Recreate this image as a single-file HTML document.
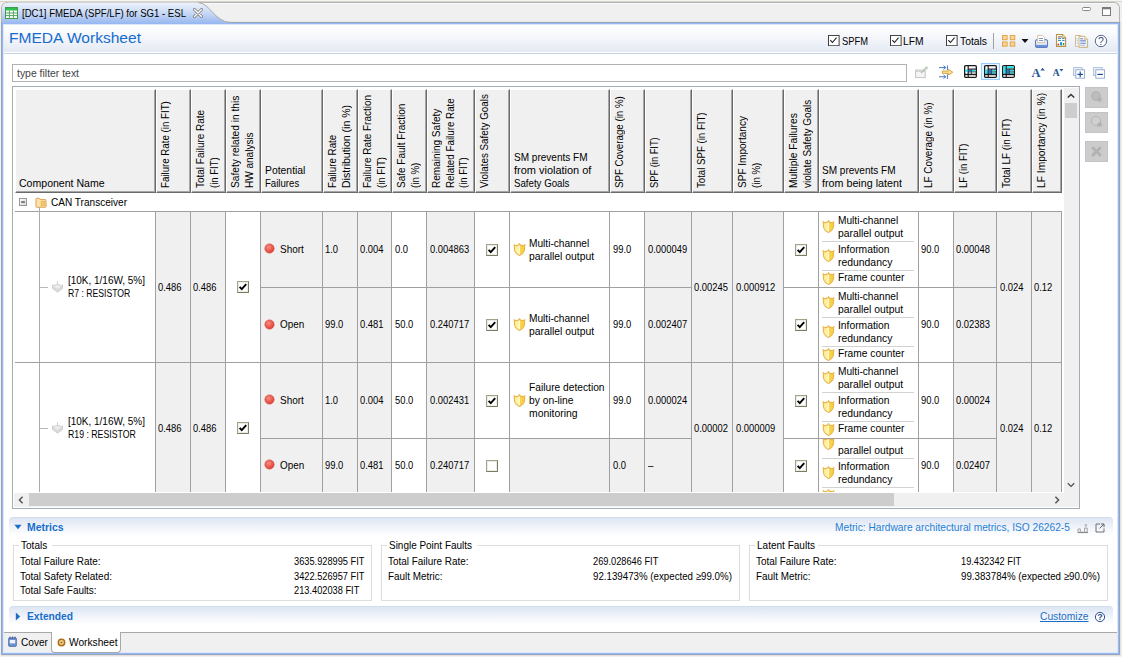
<!DOCTYPE html>
<html><head><meta charset="utf-8"><title>FMEDA Worksheet</title>
<style>
html,body{margin:0;padding:0;}
body{width:1122px;height:657px;position:relative;overflow:hidden;background:#f1f0ed;
 font-family:"Liberation Sans",sans-serif;font-size:11px;line-height:13px;color:#000;}
div,span.t,svg{position:absolute;box-sizing:border-box;}
span.t{white-space:nowrap;transform-origin:0 50%;display:block;height:13px;}
.v{transform-origin:0 0;transform:rotate(-90deg);white-space:nowrap;width:0;height:0;}
.vl{position:absolute;left:0;display:block;height:13px;line-height:13px;white-space:nowrap;transform-origin:0 50%;}
.clip{overflow:hidden;}
</style></head><body>
<svg width="0" height="0" style="left:0;top:0"><defs><linearGradient id="shg" x1="0" y1="0" x2="1" y2="0"><stop offset="0" stop-color="#fdeb8c"/><stop offset="0.45" stop-color="#fff3b4"/><stop offset="0.55" stop-color="#f9d64c"/><stop offset="1" stop-color="#f6cb3e"/></linearGradient></defs></svg>
<div style="left:0px;top:0px;width:1122px;height:1px;background:#f4f4f2;"></div>
<div style="left:0px;top:1px;width:1122px;height:1px;background:#d8d4c6;"></div>
<div style="left:1px;top:2px;width:1119px;height:21px;background:#f0f0f0;border:1px solid #b4b4b4;border-bottom:none;border-radius:6px 6px 0 0;box-shadow:inset 0 1px 0 #f8f8f8;"></div>
<div style="left:2px;top:21px;width:1117px;height:1px;background:#ece9e0;"></div>
<div style="left:1120px;top:22px;width:1px;height:634px;background:#e4e2dd;"></div>
<div style="left:1px;top:655px;width:1120px;height:1px;background:#e2e1dd;"></div>
<div style="left:1px;top:22px;width:1119px;height:633px;background:#97a3bc;"></div>
<div style="left:2px;top:23px;width:1117px;height:631px;background:#96b9f6;"></div>
<div style="left:3px;top:24px;width:1115px;height:629px;background:#dbe7fb;"></div>
<div style="left:4px;top:25px;width:1113px;height:627px;background:#ffffff;"></div>
<svg style="left:2px;top:2px" width="232" height="21" viewBox="0 0 232 21">
<defs><linearGradient id="tg" x1="0" y1="0" x2="0" y2="1"><stop offset="0" stop-color="#eef3fc"/><stop offset="0.45" stop-color="#cddcf6"/><stop offset="1" stop-color="#9bbaf0"/></linearGradient></defs>
<path d="M0 21 L0 7 Q0 0.5 7 0.5 L196 0.5 C208 1 213 20.5 229 20.5 L229 21 Z" fill="url(#tg)"/>
<path d="M196 0.5 C208 1 213 20.5 229 20.5" fill="none" stroke="#a8a8a8" stroke-width="1"/>
</svg>
<svg style="left:5px;top:7px" width="13" height="12" viewBox="0 0 13 12">
<rect x="0.5" y="0.5" width="12" height="11" fill="#fff" stroke="#3f9a4c"/>
<rect x="1" y="1" width="11" height="2.5" fill="#2fc04a"/>
<path d="M1 6h11M1 8.6h11M4.4 3.5v8M8.4 3.5v8" stroke="#56a564" stroke-width="1"/>
</svg>
<span class="t" style="left:22px;top:7px;transform:scaleX(0.871);">[DC1] FMEDA (SPF/LF) for SG1 - ESL</span>
<svg style="left:193px;top:8px" width="10" height="10" viewBox="0 0 10 10">
<path d="M1.5 1.5L8.5 8.5M8.5 1.5L1.5 8.5" stroke="#7d7d7d" stroke-width="3" stroke-linecap="round"/>
<path d="M1.5 1.5L8.5 8.5M8.5 1.5L1.5 8.5" stroke="#fff" stroke-width="1.4" stroke-linecap="round"/>
</svg>
<svg style="left:1081px;top:6px" width="32" height="11" viewBox="0 0 32 11">
<rect x="1.5" y="1.5" width="8" height="3" rx="1" fill="#fff" stroke="#858585"/>
<rect x="21.5" y="1.5" width="8" height="8" fill="#fcfcfc" stroke="#7a7a7a"/>
<path d="M21 2.6h9" stroke="#7a7a7a" stroke-width="1.3"/>
</svg>
<div style="left:4px;top:25px;width:1113px;height:27px;background:linear-gradient(180deg,#ffffff 0%,#f6f8fc 40%,#e4e9f3 100%);"></div>
<div style="left:4px;top:53px;width:1113px;height:1px;background:#c2d2e5;"></div>
<span class="t" style="left:8.6px;top:31px;transform:scaleX(1.037);font-size:15px;color:#166dcc;font-family:'Liberation Sans',sans-serif;">FMEDA Worksheet</span>
<svg style="left:828px;top:35px" width="11.6" height="11.2" viewBox="0 0 12 12" preserveAspectRatio="none"><rect x="0.5" y="0.5" width="11" height="11" fill="#fff" stroke="#3a3a3a"/><path d="M2.4 5.6L4.6 8L8.8 2.8" fill="none" stroke="#222" stroke-width="1.1"/></svg>
<span class="t" style="left:841.8px;top:34px;transform:scaleX(0.807);font-size:11.6px;">SPFM</span>
<svg style="left:890px;top:35px" width="11.6" height="11.2" viewBox="0 0 12 12" preserveAspectRatio="none"><rect x="0.5" y="0.5" width="11" height="11" fill="#fff" stroke="#3a3a3a"/><path d="M2.4 5.6L4.6 8L8.8 2.8" fill="none" stroke="#222" stroke-width="1.1"/></svg>
<span class="t" style="left:903.4px;top:34px;transform:scaleX(0.884);font-size:11.6px;">LFM</span>
<svg style="left:946px;top:35px" width="11.6" height="11.2" viewBox="0 0 12 12" preserveAspectRatio="none"><rect x="0.5" y="0.5" width="11" height="11" fill="#fff" stroke="#3a3a3a"/><path d="M2.4 5.6L4.6 8L8.8 2.8" fill="none" stroke="#222" stroke-width="1.1"/></svg>
<span class="t" style="left:959.8px;top:34px;transform:scaleX(0.891);font-size:11.6px;">Totals</span>
<div style="left:993px;top:33px;width:1px;height:16px;background:#a0a0a0;"></div>
<svg style="left:1002px;top:35px" width="14" height="12" viewBox="0 0 14 12">
<g fill="#fbd595" stroke="#e2a64a"><rect x="0.5" y="0.5" width="4.6" height="4.2"/><rect x="8.2" y="0.5" width="4.6" height="4.2"/><rect x="0.5" y="7" width="4.6" height="4.2"/><rect x="8.2" y="7" width="4.6" height="4.2"/></g></svg>
<svg style="left:1021px;top:39px" width="8" height="4" viewBox="0 0 8 4"><path d="M0.5 0h7L4 4z" fill="#111"/></svg>
<svg style="left:1034px;top:34px" width="15" height="15" viewBox="0 0 15 15">
<defs><linearGradient id="pg" x1="0" y1="0" x2="0" y2="1"><stop offset="0" stop-color="#ffffff"/><stop offset="1" stop-color="#c3d3ef"/></linearGradient></defs>
<rect x="1.5" y="5.6" width="12" height="7.8" rx="2" fill="url(#pg)" stroke="#5d7fc2" stroke-width="1.1"/>
<path d="M2 11h11v0.9q0 1.1-1.4 1.1H3.4q-1.4 0-1.4-1.1z" fill="#6d8fd3"/>
<path d="M3.6 8.6V1.4h4.8l2.2 2.2v5z" fill="#fff" stroke="#d6c08e" stroke-width="0.9"/>
<path d="M5 4.5h4M5 6.5h4.2" stroke="#7a98d0" stroke-width="1"/>
</svg>
<svg style="left:1055px;top:33px" width="12" height="15" viewBox="0 0 12 15">
<defs><linearGradient id="rpg" x1="0" y1="0" x2="0" y2="1"><stop offset="0.5" stop-color="#ffffff"/><stop offset="1" stop-color="#dffaf2"/></linearGradient></defs>
<path d="M1.5 1.5H7.5L10.6 4.6V13.4H1.5z" fill="url(#rpg)" stroke="#b8923c" stroke-width="1.1" stroke-linejoin="round"/>
<path d="M7.5 1.5V4.6H10.6" fill="#f3e6c4" stroke="#b8923c" stroke-width="0.7"/>
<rect x="3" y="3.1" width="3.8" height="1.5" fill="#a89088"/>
<rect x="3" y="5.2" width="3" height="0.9" fill="#2f7fc8"/><rect x="7" y="5.2" width="2.6" height="0.9" fill="#2f7fc8"/>
<rect x="3" y="7.1" width="3" height="0.9" fill="#2f7fc8"/><rect x="7" y="7.1" width="2.6" height="0.9" fill="#2f7fc8"/>
<path d="M3.3 10.4l1.1 1.1l-1.1 1.1l-1.1-1.1z" fill="#ee2222"/>
<rect x="5.1" y="9.2" width="1.9" height="3.1" fill="#1e88e0"/>
<ellipse cx="8.6" cy="11.1" rx="0.8" ry="1.2" fill="#1f9a4a"/>
</svg>
<svg style="left:1074px;top:34px" width="15" height="15" viewBox="0 0 15 15">
<defs><linearGradient id="cpg" x1="0" y1="0" x2="1" y2="1"><stop offset="0.4" stop-color="#ffffff"/><stop offset="1" stop-color="#dfe7f6"/></linearGradient></defs>
<path d="M1.5 1.5H6.6L8.6 3.5V12.3H1.5z" fill="#fff" stroke="#cdb47e" stroke-width="0.9"/>
<path d="M2.4 4.6h1.8M2.4 6.3h1.8M2.4 8h1.8M2.4 9.7h1.8" stroke="#a9bbe0" stroke-width="0.8"/>
<path d="M5 2.3H10.6L13.6 5.3V13.3H5z" fill="url(#cpg)" stroke="#c4a86c" stroke-width="0.9" stroke-linejoin="round"/>
<path d="M10.6 2.3V5.3H13.6" fill="#f1e4c0" stroke="#c4a86c" stroke-width="0.6"/>
<path d="M6.2 4.7h2.8M6.2 6.3h5.6" stroke="#5f7fc0" stroke-width="0.9"/><path d="M6.2 7.9h5.6M6.2 9.5h5.6" stroke="#7f99cf" stroke-width="0.9"/><path d="M6.2 11.2h4.6" stroke="#a3b6dd" stroke-width="0.9"/>
</svg>
<svg style="left:1094px;top:34px" width="14" height="14" viewBox="0 0 14 14">
<circle cx="7" cy="7" r="5.7" fill="#fff" stroke="#5a6a8c" stroke-width="1"/>
<text x="7" y="10.8" font-family="Liberation Sans, sans-serif" font-size="10.5" fill="#3d4f78" text-anchor="middle">?</text>
</svg>
<div style="left:12px;top:64px;width:895px;height:18px;background:#ffffff;border:1px solid #b2b2b2;"></div>
<span class="t" style="left:17px;top:67px;transform:scaleX(0.948);color:#444;">type filter text</span>
<svg style="left:915px;top:66px" width="14" height="13" viewBox="0 0 14 13">
<rect x="0.6" y="4" width="9.6" height="7.6" fill="#f4f4f4" stroke="#c4c4c4"/><path d="M1 5.4h9" stroke="#d0d0d0" stroke-width="1.2"/>
<path d="M6 7L11.5 1.5" stroke="#b4c4b4" stroke-width="1.4"/><circle cx="11.5" cy="2" r="1.4" fill="#bcd0bc"/>
</svg>
<svg style="left:939px;top:65px" width="15" height="14" viewBox="0 0 15 14">
<path d="M0 2.6h6.5M4.5 0.8L6.8 2.6L4.5 4.4M8.4 0.4v4.6" stroke="#4a74b8" fill="none" stroke-width="1"/>
<path d="M0 11.8h6.5M4.5 10L6.8 11.8L4.5 13.6M8.4 9.4v4.6" stroke="#4a74b8" fill="none" stroke-width="1"/>
<path d="M3.4 6h6.2V4.4l4.2 2.8L9.6 10V8.4H3.4z" fill="#fbe3a0" stroke="#d29a2c" stroke-width="0.9"/>
</svg>
<svg style="left:964px;top:65px" width="13" height="13" viewBox="0 0 13 13">
<rect x="0.65" y="0.65" width="11.7" height="11.7" rx="1.1" fill="#fff" stroke="#1a1a1a" stroke-width="1.3"/>
<rect x="1.3" y="4.6" width="2.4" height="2.1" fill="#19e6ee"/><rect x="4.8" y="4.8" width="2.2" height="2.8" fill="#0a84f0"/><rect x="7.8" y="4.8" width="3.9" height="1.6" fill="#19e6ee"/>
<path d="M4.2 0.8v11.4" stroke="#1a1a1a" stroke-width="1.2"/><path d="M4.2 4.1h8.1" stroke="#1a1a1a" stroke-width="1.1"/><path d="M0.7 9.5h11.6" stroke="#1a1a1a" stroke-width="1.5"/>
<path d="M7.4 4.1v5.4" stroke="#1a1a1a" stroke-width="0.8"/><path d="M7.4 6.9h4.9" stroke="#1a1a1a" stroke-width="0.8"/>
<rect x="1.4" y="10.5" width="2" height="0.9" fill="#d8d8d8"/><rect x="5" y="10.5" width="6.6" height="0.9" fill="#d8d8d8"/>
</svg>
<div style="left:981px;top:63px;width:19px;height:17px;background:#e5f3ff;border:1px solid #99ccff;"></div>
<svg style="left:984px;top:65px" width="13" height="13" viewBox="0 0 13 13">
<rect x="0.65" y="0.65" width="11.7" height="11.7" rx="1.1" fill="#fff" stroke="#1a1a1a" stroke-width="1.3"/>
<rect x="1.3" y="4.4" width="2.4" height="4.5" fill="#19e6ee"/><rect x="4.8" y="4.8" width="2.2" height="4" fill="#0a84f0"/><rect x="7.8" y="4.8" width="3.9" height="1.6" fill="#19e6ee"/><rect x="7.8" y="7.4" width="3.9" height="1.5" fill="#19e6ee"/>
<path d="M4.2 0.8v11.4" stroke="#1a1a1a" stroke-width="1.2"/><path d="M4.2 4.1h8.1" stroke="#1a1a1a" stroke-width="1.1"/><path d="M0.7 9.5h11.6" stroke="#1a1a1a" stroke-width="1.5"/>
<path d="M7.4 4.1v5.4" stroke="#1a1a1a" stroke-width="0.8"/><path d="M7.4 6.9h4.9" stroke="#1a1a1a" stroke-width="0.8"/>
<rect x="1.4" y="10.5" width="2" height="0.9" fill="#d8d8d8"/><rect x="5" y="10.5" width="6.6" height="0.9" fill="#d8d8d8"/>
</svg>
<svg style="left:1002px;top:65px" width="13" height="13" viewBox="0 0 13 13">
<rect x="0.65" y="0.65" width="11.7" height="11.7" rx="1.1" fill="#fff" stroke="#1a1a1a" stroke-width="1.3"/>
<rect x="1.3" y="1.3" width="2.4" height="7.6" fill="#19e6ee"/><rect x="4.8" y="1.3" width="6.9" height="2.3" fill="#19e6ee"/><rect x="4.8" y="4.8" width="2.2" height="4" fill="#0a84f0"/><rect x="7.8" y="4.8" width="3.9" height="1.6" fill="#19e6ee"/><rect x="7.8" y="7.4" width="3.9" height="1.5" fill="#19e6ee"/>
<path d="M4.2 0.8v11.4" stroke="#1a1a1a" stroke-width="1.2"/><path d="M4.2 4.1h8.1" stroke="#1a1a1a" stroke-width="1.1"/><path d="M0.7 9.5h11.6" stroke="#1a1a1a" stroke-width="1.5"/>
<path d="M7.4 4.1v5.4" stroke="#1a1a1a" stroke-width="0.8"/><path d="M7.4 6.9h4.9" stroke="#1a1a1a" stroke-width="0.8"/>
<rect x="1.4" y="10.5" width="2" height="0.9" fill="#d8d8d8"/><rect x="5" y="10.5" width="6.6" height="0.9" fill="#d8d8d8"/>
</svg>
<svg style="left:1031px;top:66px" width="15" height="12" viewBox="0 0 15 12">
<text x="0.5" y="11" font-family="Liberation Serif, serif" font-size="12.5" font-weight="bold" fill="#2b5797">A</text>
<path d="M9.4 4.4L11.6 1.8L13.8 4.4z" fill="#2b5797"/></svg>
<svg style="left:1052px;top:66px" width="13" height="12" viewBox="0 0 13 12">
<text x="0.5" y="10.2" font-family="Liberation Serif, serif" font-size="10" font-weight="bold" fill="#2b5797">A</text>
<path d="M7.4 3L9.4 5.4L11.4 3z" fill="#2b5797"/></svg>
<svg style="left:1073px;top:67px" width="13" height="12" viewBox="0 0 13 12">
<rect x="0.6" y="0.6" width="8.6" height="8" fill="#eef3fb" stroke="#a9bbd8" stroke-width="0.9"/>
<rect x="2.8" y="2.8" width="8.8" height="8.4" fill="#fff" stroke="#8ea6cc" stroke-width="0.9"/>
<path d="M4.4 7.4h5.6" stroke="#1c4f96" stroke-width="1.2"/><path d="M7.2 4.6v5.6" stroke="#1c4f96" stroke-width="1.2"/></svg>
<svg style="left:1093px;top:67px" width="13" height="12" viewBox="0 0 13 12">
<rect x="0.6" y="0.6" width="8.6" height="8" fill="#eef3fb" stroke="#a9bbd8" stroke-width="0.9"/>
<rect x="2.8" y="2.8" width="8.8" height="8.4" fill="#fff" stroke="#8ea6cc" stroke-width="0.9"/>
<path d="M4.4 7.4h5.6" stroke="#1c4f96" stroke-width="1.2"/></svg>
<div style="left:12px;top:86px;width:1068px;height:423px;background:#ffffff;border:1px solid #a4acb8;"></div>
<div style="left:15px;top:89px;width:141px;height:104px;background:#f0f0f0;border:1px solid #6a6a6a;border-left-color:#fff;border-top-color:#fff;box-shadow:inset -1px -1px 0 #a6a6a6;"></div>
<div style="left:156px;top:89px;width:35px;height:104px;background:#f0f0f0;border:1px solid #6a6a6a;border-left-color:#fff;border-top-color:#fff;box-shadow:inset -1px -1px 0 #a6a6a6;"></div>
<div style="left:191px;top:89px;width:35px;height:104px;background:#f0f0f0;border:1px solid #6a6a6a;border-left-color:#fff;border-top-color:#fff;box-shadow:inset -1px -1px 0 #a6a6a6;"></div>
<div style="left:226px;top:89px;width:35px;height:104px;background:#f0f0f0;border:1px solid #6a6a6a;border-left-color:#fff;border-top-color:#fff;box-shadow:inset -1px -1px 0 #a6a6a6;"></div>
<div style="left:261px;top:89px;width:62px;height:104px;background:#f0f0f0;border:1px solid #6a6a6a;border-left-color:#fff;border-top-color:#fff;box-shadow:inset -1px -1px 0 #a6a6a6;"></div>
<div style="left:323px;top:89px;width:35px;height:104px;background:#f0f0f0;border:1px solid #6a6a6a;border-left-color:#fff;border-top-color:#fff;box-shadow:inset -1px -1px 0 #a6a6a6;"></div>
<div style="left:358px;top:89px;width:34px;height:104px;background:#f0f0f0;border:1px solid #6a6a6a;border-left-color:#fff;border-top-color:#fff;box-shadow:inset -1px -1px 0 #a6a6a6;"></div>
<div style="left:392px;top:89px;width:35px;height:104px;background:#f0f0f0;border:1px solid #6a6a6a;border-left-color:#fff;border-top-color:#fff;box-shadow:inset -1px -1px 0 #a6a6a6;"></div>
<div style="left:427px;top:89px;width:48px;height:104px;background:#f0f0f0;border:1px solid #6a6a6a;border-left-color:#fff;border-top-color:#fff;box-shadow:inset -1px -1px 0 #a6a6a6;"></div>
<div style="left:475px;top:89px;width:35px;height:104px;background:#f0f0f0;border:1px solid #6a6a6a;border-left-color:#fff;border-top-color:#fff;box-shadow:inset -1px -1px 0 #a6a6a6;"></div>
<div style="left:510px;top:89px;width:100px;height:104px;background:#f0f0f0;border:1px solid #6a6a6a;border-left-color:#fff;border-top-color:#fff;box-shadow:inset -1px -1px 0 #a6a6a6;"></div>
<div style="left:610px;top:89px;width:35px;height:104px;background:#f0f0f0;border:1px solid #6a6a6a;border-left-color:#fff;border-top-color:#fff;box-shadow:inset -1px -1px 0 #a6a6a6;"></div>
<div style="left:645px;top:89px;width:47px;height:104px;background:#f0f0f0;border:1px solid #6a6a6a;border-left-color:#fff;border-top-color:#fff;box-shadow:inset -1px -1px 0 #a6a6a6;"></div>
<div style="left:692px;top:89px;width:41px;height:104px;background:#f0f0f0;border:1px solid #6a6a6a;border-left-color:#fff;border-top-color:#fff;box-shadow:inset -1px -1px 0 #a6a6a6;"></div>
<div style="left:733px;top:89px;width:51px;height:104px;background:#f0f0f0;border:1px solid #6a6a6a;border-left-color:#fff;border-top-color:#fff;box-shadow:inset -1px -1px 0 #a6a6a6;"></div>
<div style="left:784px;top:89px;width:35px;height:104px;background:#f0f0f0;border:1px solid #6a6a6a;border-left-color:#fff;border-top-color:#fff;box-shadow:inset -1px -1px 0 #a6a6a6;"></div>
<div style="left:819px;top:89px;width:100px;height:104px;background:#f0f0f0;border:1px solid #6a6a6a;border-left-color:#fff;border-top-color:#fff;box-shadow:inset -1px -1px 0 #a6a6a6;"></div>
<div style="left:919px;top:89px;width:35px;height:104px;background:#f0f0f0;border:1px solid #6a6a6a;border-left-color:#fff;border-top-color:#fff;box-shadow:inset -1px -1px 0 #a6a6a6;"></div>
<div style="left:954px;top:89px;width:43px;height:104px;background:#f0f0f0;border:1px solid #6a6a6a;border-left-color:#fff;border-top-color:#fff;box-shadow:inset -1px -1px 0 #a6a6a6;"></div>
<div style="left:997px;top:89px;width:35px;height:104px;background:#f0f0f0;border:1px solid #6a6a6a;border-left-color:#fff;border-top-color:#fff;box-shadow:inset -1px -1px 0 #a6a6a6;"></div>
<div style="left:1032px;top:89px;width:30px;height:104px;background:#f0f0f0;border:1px solid #6a6a6a;border-left-color:#fff;border-top-color:#fff;box-shadow:inset -1px -1px 0 #a6a6a6;"></div>
<span class="t" style="left:18.7px;top:177px;transform:scaleX(0.959);">Component Name</span>
<div class="v" style="left:158.90px;top:188.3px;"><span class="vl" style="top:0.00px;transform:scaleX(0.882)">Failure Rate (in FIT)</span></div>
<div class="v" style="left:193.90px;top:188.3px;"><span class="vl" style="top:0.00px;transform:scaleX(0.906)">Total Failure Rate</span><span class="vl" style="top:13.70px;transform:scaleX(0.866)">(in FIT)</span></div>
<div class="v" style="left:228.90px;top:188.3px;"><span class="vl" style="top:0.00px;transform:scaleX(0.926)">Safety related in this</span><span class="vl" style="top:13.70px;transform:scaleX(0.910)">HW analysis</span></div>
<span class="t" style="left:264.5px;top:164px;transform:scaleX(0.944);">Potential</span>
<span class="t" style="left:264.5px;top:177px;transform:scaleX(0.874);">Failures</span>
<div class="v" style="left:325.90px;top:188.3px;"><span class="vl" style="top:0.00px;transform:scaleX(0.888)">Failure Rate</span><span class="vl" style="top:13.70px;transform:scaleX(0.957)">Distribution (in %)</span></div>
<div class="v" style="left:360.90px;top:188.3px;"><span class="vl" style="top:0.00px;transform:scaleX(0.905)">Failure Rate Fraction</span><span class="vl" style="top:13.70px;transform:scaleX(0.875)">(in FIT)</span></div>
<div class="v" style="left:394.90px;top:188.3px;"><span class="vl" style="top:0.00px;transform:scaleX(0.907)">Safe Fault Fraction</span><span class="vl" style="top:13.70px;transform:scaleX(0.881)">(in %)</span></div>
<div class="v" style="left:429.90px;top:188.3px;"><span class="vl" style="top:0.00px;transform:scaleX(0.914)">Remaining Safety</span><span class="vl" style="top:13.70px;transform:scaleX(0.890)">Related Failure Rate</span><span class="vl" style="top:27.40px;transform:scaleX(0.866)">(in FIT)</span></div>
<div class="v" style="left:477.90px;top:188.3px;"><span class="vl" style="top:0.00px;transform:scaleX(0.894)">Violates Safety Goals</span></div>
<span class="t" style="left:513.7px;top:151px;transform:scaleX(0.912);">SM prevents FM</span>
<span class="t" style="left:513.7px;top:164px;transform:scaleX(0.997);">from violation of</span>
<span class="t" style="left:513.7px;top:177px;transform:scaleX(0.880);">Safety Goals</span>
<div class="v" style="left:612.90px;top:188.3px;"><span class="vl" style="top:0.00px;transform:scaleX(0.883)">SPF Coverage (in %)</span></div>
<div class="v" style="left:647.90px;top:188.3px;"><span class="vl" style="top:0.00px;transform:scaleX(0.847)">SPF (in FIT)</span></div>
<div class="v" style="left:694.90px;top:188.3px;"><span class="vl" style="top:0.00px;transform:scaleX(0.877)">Total SPF (in FIT)</span></div>
<div class="v" style="left:735.90px;top:188.3px;"><span class="vl" style="top:0.00px;transform:scaleX(0.912)">SPF Importancy</span><span class="vl" style="top:13.70px;transform:scaleX(0.881)">(in %)</span></div>
<div class="v" style="left:786.90px;top:188.3px;"><span class="vl" style="top:0.00px;transform:scaleX(0.935)">Multiple Failures</span><span class="vl" style="top:13.70px;transform:scaleX(0.901)">violate Safety Goals</span></div>
<span class="t" style="left:822.4px;top:164px;transform:scaleX(0.912);">SM prevents FM</span>
<span class="t" style="left:822.4px;top:177px;transform:scaleX(0.975);">from being latent</span>
<div class="v" style="left:921.90px;top:188.3px;"><span class="vl" style="top:0.00px;transform:scaleX(0.898)">LF Coverage (in %)</span></div>
<div class="v" style="left:956.90px;top:188.3px;"><span class="vl" style="top:0.00px;transform:scaleX(0.865)">LF (in FIT)</span></div>
<div class="v" style="left:999.90px;top:188.3px;"><span class="vl" style="top:0.00px;transform:scaleX(0.894)">Total LF (in FIT)</span></div>
<div class="v" style="left:1034.90px;top:188.3px;"><span class="vl" style="top:0.00px;transform:scaleX(0.931)">LF Importancy (in %)</span></div>
<div style="left:15px;top:211px;width:1047px;height:1px;background:#a0a0a0;"></div>
<svg style="left:19px;top:198px" width="8" height="8" viewBox="0 0 9 9">
<defs><linearGradient id="eg" x1="0" y1="0" x2="1" y2="1"><stop offset="0" stop-color="#fff"/><stop offset="1" stop-color="#d4d4d4"/></linearGradient></defs>
<rect x="0.5" y="0.5" width="8" height="8" fill="url(#eg)" stroke="#8f8f8f"/><path d="M2.4 4.5h4.2" stroke="#111" stroke-width="1.1"/></svg>
<svg style="left:34.5px;top:196.5px" width="12" height="11" viewBox="0 0 13 12">
<path d="M1 10.4V2.4q0-1 1-1h2.6l1 1.4H11q1 0 1 1v6.6q0 0.8-1 0.8H2q-1 0-1-0.8z" fill="#fbe3ab" stroke="#dc9a45" stroke-width="1"/>
<rect x="6.6" y="4.6" width="4" height="5" fill="#f6c86e" stroke="#e0a95a" stroke-width="0.6"/>
</svg>
<span class="t" style="left:50.7px;top:196px;transform:scaleX(0.914);">CAN Transceiver</span>
<div style="left:39px;top:207px;width:1px;height:285px;background:#acacac;"></div>
<div style="left:156px;top:212px;width:34px;height:150px;background:#f0f0f0;"></div>
<div style="left:191px;top:212px;width:34px;height:150px;background:#f0f0f0;"></div>
<div style="left:692px;top:212px;width:40px;height:150px;background:#f0f0f0;"></div>
<div style="left:733px;top:212px;width:50px;height:150px;background:#f0f0f0;"></div>
<div style="left:997px;top:212px;width:34px;height:150px;background:#f0f0f0;"></div>
<div style="left:1032px;top:212px;width:29px;height:150px;background:#f0f0f0;"></div>
<div style="left:155px;top:212px;width:1px;height:150px;background:#a0a0a0;"></div>
<div style="left:190px;top:212px;width:1px;height:150px;background:#a0a0a0;"></div>
<div style="left:225px;top:212px;width:1px;height:150px;background:#a0a0a0;"></div>
<div style="left:260px;top:212px;width:1px;height:150px;background:#a0a0a0;"></div>
<div style="left:322px;top:212px;width:1px;height:150px;background:#a0a0a0;"></div>
<div style="left:357px;top:212px;width:1px;height:150px;background:#a0a0a0;"></div>
<div style="left:391px;top:212px;width:1px;height:150px;background:#a0a0a0;"></div>
<div style="left:426px;top:212px;width:1px;height:150px;background:#a0a0a0;"></div>
<div style="left:474px;top:212px;width:1px;height:150px;background:#a0a0a0;"></div>
<div style="left:509px;top:212px;width:1px;height:150px;background:#a0a0a0;"></div>
<div style="left:609px;top:212px;width:1px;height:150px;background:#a0a0a0;"></div>
<div style="left:644px;top:212px;width:1px;height:150px;background:#a0a0a0;"></div>
<div style="left:691px;top:212px;width:1px;height:150px;background:#a0a0a0;"></div>
<div style="left:732px;top:212px;width:1px;height:150px;background:#a0a0a0;"></div>
<div style="left:783px;top:212px;width:1px;height:150px;background:#a0a0a0;"></div>
<div style="left:818px;top:212px;width:1px;height:150px;background:#a0a0a0;"></div>
<div style="left:918px;top:212px;width:1px;height:150px;background:#a0a0a0;"></div>
<div style="left:953px;top:212px;width:1px;height:150px;background:#a0a0a0;"></div>
<div style="left:996px;top:212px;width:1px;height:150px;background:#a0a0a0;"></div>
<div style="left:1031px;top:212px;width:1px;height:150px;background:#a0a0a0;"></div>
<div style="left:1061px;top:212px;width:1px;height:150px;background:#a0a0a0;"></div>
<div style="left:40px;top:287px;width:8px;height:1px;background:#b8b8b8;"></div>
<svg style="left:52px;top:281px" width="12" height="12" viewBox="0 0 12 12">
<path d="M0.5 5.2L5.5 3.2L10.6 5.2V7.4L5.5 11.2L0.5 7.4z" fill="#dcdcdc" stroke="#c9c9c9" stroke-width="0.8"/>
<path d="M0.5 5.2L5.5 3.2L10.6 5.2L5.5 8.6z" fill="#ececec" stroke="#cdcdcd" stroke-width="0.7"/>
<path d="M5.5 0.2v3.2M0.6 3.6v1.8M10.5 3.6v1.8" stroke="#cfcfcf" stroke-width="1"/></svg>
<span class="t" style="left:67.6px;top:274px;transform:scaleX(0.906);">[10K, 1/16W, 5%]</span>
<span class="t" style="left:67.6px;top:287px;transform:scaleX(0.786);">R7 : RESISTOR</span>
<span class="t" style="left:158.2px;top:281px;transform:scaleX(0.853);">0.486</span>
<span class="t" style="left:193.2px;top:281px;transform:scaleX(0.853);">0.486</span>
<svg style="left:237px;top:281px" width="12" height="12" viewBox="0 0 12 12"><rect x="0.5" y="0.5" width="11" height="11" fill="#fff" stroke="#a2a38c"/><path d="M11.5 0.5v11h-11" fill="none" stroke="#7a7b62"/><rect x="1.5" y="1.5" width="9" height="9" fill="none" stroke="#ecece4"/><path d="M2.6 5.8L4.8 8.2L9.2 3.2" fill="none" stroke="#000" stroke-width="1.9"/></svg>
<span class="t" style="left:694.4px;top:281px;transform:scaleX(0.852);">0.00245</span>
<span class="t" style="left:735.7px;top:281px;transform:scaleX(0.852);">0.000912</span>
<span class="t" style="left:999.8px;top:281px;transform:scaleX(0.853);">0.024</span>
<span class="t" style="left:1034.0px;top:281px;transform:scaleX(0.854);">0.12</span>
<div style="left:261px;top:287px;width:431px;height:1px;background:#a0a0a0;"></div>
<div style="left:784px;top:287px;width:213px;height:1px;background:#a0a0a0;"></div>
<div style="left:261px;top:212px;width:61px;height:75px;background:#f0f0f0;"></div>
<div style="left:323px;top:212px;width:34px;height:75px;background:#f0f0f0;"></div>
<div style="left:358px;top:212px;width:33px;height:75px;background:#f0f0f0;"></div>
<div style="left:427px;top:212px;width:47px;height:75px;background:#f0f0f0;"></div>
<div style="left:645px;top:212px;width:46px;height:75px;background:#f0f0f0;"></div>
<div style="left:954px;top:212px;width:42px;height:75px;background:#f0f0f0;"></div>
<svg style="left:264.2px;top:243.2px" width="11" height="11" viewBox="0 0 11 11">
<defs><radialGradient id="rg249" cx="0.4" cy="0.35" r="0.7"><stop offset="0" stop-color="#f98a7e"/><stop offset="1" stop-color="#df3a2e"/></radialGradient></defs>
<circle cx="5.5" cy="5.5" r="4.6" fill="url(#rg249)" stroke="#d4473c" stroke-width="0.7"/></svg>
<span class="t" style="left:280px;top:243px;transform:scaleX(0.905);">Short</span>
<span class="t" style="left:325.4px;top:243px;transform:scaleX(0.856);">1.0</span>
<span class="t" style="left:360.4px;top:243px;transform:scaleX(0.853);">0.004</span>
<span class="t" style="left:394.8px;top:243px;transform:scaleX(0.856);">0.0</span>
<span class="t" style="left:430.0px;top:243px;transform:scaleX(0.852);">0.004863</span>
<svg style="left:486px;top:244px" width="12" height="12" viewBox="0 0 12 12"><rect x="0.5" y="0.5" width="11" height="11" fill="#fff" stroke="#a2a38c"/><path d="M11.5 0.5v11h-11" fill="none" stroke="#7a7b62"/><rect x="1.5" y="1.5" width="9" height="9" fill="none" stroke="#ecece4"/><path d="M2.6 5.8L4.8 8.2L9.2 3.2" fill="none" stroke="#000" stroke-width="1.9"/></svg>
<svg style="left:513px;top:243px" width="13" height="13" viewBox="0 0 13 13">
<path d="M1.3 2.5Q3.9 3.1 6.5 1.5Q9.1 3.1 11.7 2.5L11.5 7Q10.8 10.3 6.5 12.5Q2.2 10.3 1.5 7z" fill="url(#shg)" stroke="#e9b54e" stroke-width="1.1" stroke-linejoin="round"/>
<path d="M6.5 2.6V11.4" stroke="#fff7cf" stroke-width="1"/>
<circle cx="1.3" cy="1.9" r="0.8" fill="#efbd55"/><circle cx="6.5" cy="0.8" r="0.8" fill="#efbd55"/><circle cx="11.7" cy="1.9" r="0.8" fill="#efbd55"/>
</svg>
<span class="t" style="left:529.4px;top:237px;transform:scaleX(0.921);">Multi-channel</span>
<span class="t" style="left:529.4px;top:250px;transform:scaleX(0.941);">parallel output</span>
<span class="t" style="left:613.0px;top:243px;transform:scaleX(0.854);">99.0</span>
<span class="t" style="left:647.7px;top:243px;transform:scaleX(0.852);">0.000049</span>
<svg style="left:795px;top:244px" width="12" height="12" viewBox="0 0 12 12"><rect x="0.5" y="0.5" width="11" height="11" fill="#fff" stroke="#a2a38c"/><path d="M11.5 0.5v11h-11" fill="none" stroke="#7a7b62"/><rect x="1.5" y="1.5" width="9" height="9" fill="none" stroke="#ecece4"/><path d="M2.6 5.8L4.8 8.2L9.2 3.2" fill="none" stroke="#000" stroke-width="1.9"/></svg>
<div class="clip" style="left:819px;top:212px;width:99px;height:75px;">
<svg style="left:3px;top:8px" width="13" height="13" viewBox="0 0 13 13">
<path d="M1.3 2.5Q3.9 3.1 6.5 1.5Q9.1 3.1 11.7 2.5L11.5 7Q10.8 10.3 6.5 12.5Q2.2 10.3 1.5 7z" fill="url(#shg)" stroke="#e9b54e" stroke-width="1.1" stroke-linejoin="round"/>
<path d="M6.5 2.6V11.4" stroke="#fff7cf" stroke-width="1"/>
<circle cx="1.3" cy="1.9" r="0.8" fill="#efbd55"/><circle cx="6.5" cy="0.8" r="0.8" fill="#efbd55"/><circle cx="11.7" cy="1.9" r="0.8" fill="#efbd55"/>
</svg>
<svg style="left:3px;top:37px" width="13" height="13" viewBox="0 0 13 13">
<path d="M1.3 2.5Q3.9 3.1 6.5 1.5Q9.1 3.1 11.7 2.5L11.5 7Q10.8 10.3 6.5 12.5Q2.2 10.3 1.5 7z" fill="url(#shg)" stroke="#e9b54e" stroke-width="1.1" stroke-linejoin="round"/>
<path d="M6.5 2.6V11.4" stroke="#fff7cf" stroke-width="1"/>
<circle cx="1.3" cy="1.9" r="0.8" fill="#efbd55"/><circle cx="6.5" cy="0.8" r="0.8" fill="#efbd55"/><circle cx="11.7" cy="1.9" r="0.8" fill="#efbd55"/>
</svg>
<svg style="left:3px;top:60px" width="13" height="13" viewBox="0 0 13 13">
<path d="M1.3 2.5Q3.9 3.1 6.5 1.5Q9.1 3.1 11.7 2.5L11.5 7Q10.8 10.3 6.5 12.5Q2.2 10.3 1.5 7z" fill="url(#shg)" stroke="#e9b54e" stroke-width="1.1" stroke-linejoin="round"/>
<path d="M6.5 2.6V11.4" stroke="#fff7cf" stroke-width="1"/>
<circle cx="1.3" cy="1.9" r="0.8" fill="#efbd55"/><circle cx="6.5" cy="0.8" r="0.8" fill="#efbd55"/><circle cx="11.7" cy="1.9" r="0.8" fill="#efbd55"/>
</svg>
<span class="t" style="left:19.2px;top:2px;transform:scaleX(0.921);">Multi-channel</span>
<span class="t" style="left:19.2px;top:15px;transform:scaleX(0.941);">parallel output</span>
<span class="t" style="left:19.2px;top:31px;transform:scaleX(0.937);">Information</span>
<span class="t" style="left:19.2px;top:44px;transform:scaleX(0.945);">redundancy</span>
<span class="t" style="left:19.2px;top:59px;transform:scaleX(0.927);">Frame counter</span>
<div style="left:3px;top:29px;width:92px;height:1px;background:#d2d2d2;"></div>
<div style="left:3px;top:58px;width:92px;height:1px;background:#d2d2d2;"></div>
</div>
<span class="t" style="left:920.8px;top:243px;transform:scaleX(0.854);">90.0</span>
<span class="t" style="left:955.7px;top:243px;transform:scaleX(0.852);">0.00048</span>
<div style="left:261px;top:288px;width:61px;height:74px;background:#f0f0f0;"></div>
<div style="left:323px;top:288px;width:34px;height:74px;background:#f0f0f0;"></div>
<div style="left:358px;top:288px;width:33px;height:74px;background:#f0f0f0;"></div>
<div style="left:427px;top:288px;width:47px;height:74px;background:#f0f0f0;"></div>
<div style="left:645px;top:288px;width:46px;height:74px;background:#f0f0f0;"></div>
<div style="left:954px;top:288px;width:42px;height:74px;background:#f0f0f0;"></div>
<svg style="left:264.2px;top:318.7px" width="11" height="11" viewBox="0 0 11 11">
<defs><radialGradient id="rg324" cx="0.4" cy="0.35" r="0.7"><stop offset="0" stop-color="#f98a7e"/><stop offset="1" stop-color="#df3a2e"/></radialGradient></defs>
<circle cx="5.5" cy="5.5" r="4.6" fill="url(#rg324)" stroke="#d4473c" stroke-width="0.7"/></svg>
<span class="t" style="left:280px;top:318px;transform:scaleX(0.899);">Open</span>
<span class="t" style="left:325.4px;top:318px;transform:scaleX(0.854);">99.0</span>
<span class="t" style="left:360.4px;top:318px;transform:scaleX(0.853);">0.481</span>
<span class="t" style="left:394.8px;top:318px;transform:scaleX(0.854);">50.0</span>
<span class="t" style="left:430.0px;top:318px;transform:scaleX(0.852);">0.240717</span>
<svg style="left:486px;top:319px" width="12" height="12" viewBox="0 0 12 12"><rect x="0.5" y="0.5" width="11" height="11" fill="#fff" stroke="#a2a38c"/><path d="M11.5 0.5v11h-11" fill="none" stroke="#7a7b62"/><rect x="1.5" y="1.5" width="9" height="9" fill="none" stroke="#ecece4"/><path d="M2.6 5.8L4.8 8.2L9.2 3.2" fill="none" stroke="#000" stroke-width="1.9"/></svg>
<svg style="left:513px;top:318px" width="13" height="13" viewBox="0 0 13 13">
<path d="M1.3 2.5Q3.9 3.1 6.5 1.5Q9.1 3.1 11.7 2.5L11.5 7Q10.8 10.3 6.5 12.5Q2.2 10.3 1.5 7z" fill="url(#shg)" stroke="#e9b54e" stroke-width="1.1" stroke-linejoin="round"/>
<path d="M6.5 2.6V11.4" stroke="#fff7cf" stroke-width="1"/>
<circle cx="1.3" cy="1.9" r="0.8" fill="#efbd55"/><circle cx="6.5" cy="0.8" r="0.8" fill="#efbd55"/><circle cx="11.7" cy="1.9" r="0.8" fill="#efbd55"/>
</svg>
<span class="t" style="left:529.4px;top:312px;transform:scaleX(0.921);">Multi-channel</span>
<span class="t" style="left:529.4px;top:325px;transform:scaleX(0.941);">parallel output</span>
<span class="t" style="left:613.0px;top:318px;transform:scaleX(0.854);">99.0</span>
<span class="t" style="left:647.7px;top:318px;transform:scaleX(0.852);">0.002407</span>
<svg style="left:795px;top:319px" width="12" height="12" viewBox="0 0 12 12"><rect x="0.5" y="0.5" width="11" height="11" fill="#fff" stroke="#a2a38c"/><path d="M11.5 0.5v11h-11" fill="none" stroke="#7a7b62"/><rect x="1.5" y="1.5" width="9" height="9" fill="none" stroke="#ecece4"/><path d="M2.6 5.8L4.8 8.2L9.2 3.2" fill="none" stroke="#000" stroke-width="1.9"/></svg>
<div class="clip" style="left:819px;top:288px;width:99px;height:74px;">
<svg style="left:3px;top:8px" width="13" height="13" viewBox="0 0 13 13">
<path d="M1.3 2.5Q3.9 3.1 6.5 1.5Q9.1 3.1 11.7 2.5L11.5 7Q10.8 10.3 6.5 12.5Q2.2 10.3 1.5 7z" fill="url(#shg)" stroke="#e9b54e" stroke-width="1.1" stroke-linejoin="round"/>
<path d="M6.5 2.6V11.4" stroke="#fff7cf" stroke-width="1"/>
<circle cx="1.3" cy="1.9" r="0.8" fill="#efbd55"/><circle cx="6.5" cy="0.8" r="0.8" fill="#efbd55"/><circle cx="11.7" cy="1.9" r="0.8" fill="#efbd55"/>
</svg>
<svg style="left:3px;top:37px" width="13" height="13" viewBox="0 0 13 13">
<path d="M1.3 2.5Q3.9 3.1 6.5 1.5Q9.1 3.1 11.7 2.5L11.5 7Q10.8 10.3 6.5 12.5Q2.2 10.3 1.5 7z" fill="url(#shg)" stroke="#e9b54e" stroke-width="1.1" stroke-linejoin="round"/>
<path d="M6.5 2.6V11.4" stroke="#fff7cf" stroke-width="1"/>
<circle cx="1.3" cy="1.9" r="0.8" fill="#efbd55"/><circle cx="6.5" cy="0.8" r="0.8" fill="#efbd55"/><circle cx="11.7" cy="1.9" r="0.8" fill="#efbd55"/>
</svg>
<svg style="left:3px;top:60px" width="13" height="13" viewBox="0 0 13 13">
<path d="M1.3 2.5Q3.9 3.1 6.5 1.5Q9.1 3.1 11.7 2.5L11.5 7Q10.8 10.3 6.5 12.5Q2.2 10.3 1.5 7z" fill="url(#shg)" stroke="#e9b54e" stroke-width="1.1" stroke-linejoin="round"/>
<path d="M6.5 2.6V11.4" stroke="#fff7cf" stroke-width="1"/>
<circle cx="1.3" cy="1.9" r="0.8" fill="#efbd55"/><circle cx="6.5" cy="0.8" r="0.8" fill="#efbd55"/><circle cx="11.7" cy="1.9" r="0.8" fill="#efbd55"/>
</svg>
<span class="t" style="left:19.2px;top:2px;transform:scaleX(0.921);">Multi-channel</span>
<span class="t" style="left:19.2px;top:15px;transform:scaleX(0.941);">parallel output</span>
<span class="t" style="left:19.2px;top:31px;transform:scaleX(0.937);">Information</span>
<span class="t" style="left:19.2px;top:44px;transform:scaleX(0.945);">redundancy</span>
<span class="t" style="left:19.2px;top:59px;transform:scaleX(0.927);">Frame counter</span>
<div style="left:3px;top:29px;width:92px;height:1px;background:#d2d2d2;"></div>
<div style="left:3px;top:58px;width:92px;height:1px;background:#d2d2d2;"></div>
</div>
<span class="t" style="left:920.8px;top:318px;transform:scaleX(0.854);">90.0</span>
<span class="t" style="left:955.7px;top:318px;transform:scaleX(0.852);">0.02383</span>
<div style="left:15px;top:362px;width:1047px;height:1px;background:#a0a0a0;"></div>
<div style="left:156px;top:363px;width:34px;height:129px;background:#f0f0f0;"></div>
<div style="left:191px;top:363px;width:34px;height:129px;background:#f0f0f0;"></div>
<div style="left:692px;top:363px;width:40px;height:129px;background:#f0f0f0;"></div>
<div style="left:733px;top:363px;width:50px;height:129px;background:#f0f0f0;"></div>
<div style="left:997px;top:363px;width:34px;height:129px;background:#f0f0f0;"></div>
<div style="left:1032px;top:363px;width:29px;height:129px;background:#f0f0f0;"></div>
<div style="left:155px;top:363px;width:1px;height:129px;background:#a0a0a0;"></div>
<div style="left:190px;top:363px;width:1px;height:129px;background:#a0a0a0;"></div>
<div style="left:225px;top:363px;width:1px;height:129px;background:#a0a0a0;"></div>
<div style="left:260px;top:363px;width:1px;height:129px;background:#a0a0a0;"></div>
<div style="left:322px;top:363px;width:1px;height:129px;background:#a0a0a0;"></div>
<div style="left:357px;top:363px;width:1px;height:129px;background:#a0a0a0;"></div>
<div style="left:391px;top:363px;width:1px;height:129px;background:#a0a0a0;"></div>
<div style="left:426px;top:363px;width:1px;height:129px;background:#a0a0a0;"></div>
<div style="left:474px;top:363px;width:1px;height:129px;background:#a0a0a0;"></div>
<div style="left:509px;top:363px;width:1px;height:129px;background:#a0a0a0;"></div>
<div style="left:609px;top:363px;width:1px;height:129px;background:#a0a0a0;"></div>
<div style="left:644px;top:363px;width:1px;height:129px;background:#a0a0a0;"></div>
<div style="left:691px;top:363px;width:1px;height:129px;background:#a0a0a0;"></div>
<div style="left:732px;top:363px;width:1px;height:129px;background:#a0a0a0;"></div>
<div style="left:783px;top:363px;width:1px;height:129px;background:#a0a0a0;"></div>
<div style="left:818px;top:363px;width:1px;height:129px;background:#a0a0a0;"></div>
<div style="left:918px;top:363px;width:1px;height:129px;background:#a0a0a0;"></div>
<div style="left:953px;top:363px;width:1px;height:129px;background:#a0a0a0;"></div>
<div style="left:996px;top:363px;width:1px;height:129px;background:#a0a0a0;"></div>
<div style="left:1031px;top:363px;width:1px;height:129px;background:#a0a0a0;"></div>
<div style="left:1061px;top:363px;width:1px;height:129px;background:#a0a0a0;"></div>
<div style="left:40px;top:428px;width:8px;height:1px;background:#b8b8b8;"></div>
<svg style="left:52px;top:422px" width="12" height="12" viewBox="0 0 12 12">
<path d="M0.5 5.2L5.5 3.2L10.6 5.2V7.4L5.5 11.2L0.5 7.4z" fill="#dcdcdc" stroke="#c9c9c9" stroke-width="0.8"/>
<path d="M0.5 5.2L5.5 3.2L10.6 5.2L5.5 8.6z" fill="#ececec" stroke="#cdcdcd" stroke-width="0.7"/>
<path d="M5.5 0.2v3.2M0.6 3.6v1.8M10.5 3.6v1.8" stroke="#cfcfcf" stroke-width="1"/></svg>
<span class="t" style="left:67.6px;top:415px;transform:scaleX(0.906);">[10K, 1/16W, 5%]</span>
<span class="t" style="left:67.6px;top:428px;transform:scaleX(0.794);">R19 : RESISTOR</span>
<span class="t" style="left:158.2px;top:422px;transform:scaleX(0.853);">0.486</span>
<span class="t" style="left:193.2px;top:422px;transform:scaleX(0.853);">0.486</span>
<svg style="left:237px;top:422px" width="12" height="12" viewBox="0 0 12 12"><rect x="0.5" y="0.5" width="11" height="11" fill="#fff" stroke="#a2a38c"/><path d="M11.5 0.5v11h-11" fill="none" stroke="#7a7b62"/><rect x="1.5" y="1.5" width="9" height="9" fill="none" stroke="#ecece4"/><path d="M2.6 5.8L4.8 8.2L9.2 3.2" fill="none" stroke="#000" stroke-width="1.9"/></svg>
<span class="t" style="left:694.4px;top:422px;transform:scaleX(0.852);">0.00002</span>
<span class="t" style="left:735.7px;top:422px;transform:scaleX(0.852);">0.000009</span>
<span class="t" style="left:999.8px;top:422px;transform:scaleX(0.853);">0.024</span>
<span class="t" style="left:1034.0px;top:422px;transform:scaleX(0.854);">0.12</span>
<div style="left:261px;top:438px;width:431px;height:1px;background:#a0a0a0;"></div>
<div style="left:784px;top:438px;width:213px;height:1px;background:#a0a0a0;"></div>
<div style="left:261px;top:363px;width:61px;height:75px;background:#f0f0f0;"></div>
<div style="left:323px;top:363px;width:34px;height:75px;background:#f0f0f0;"></div>
<div style="left:358px;top:363px;width:33px;height:75px;background:#f0f0f0;"></div>
<div style="left:427px;top:363px;width:47px;height:75px;background:#f0f0f0;"></div>
<div style="left:645px;top:363px;width:46px;height:75px;background:#f0f0f0;"></div>
<div style="left:954px;top:363px;width:42px;height:75px;background:#f0f0f0;"></div>
<svg style="left:264.2px;top:394.2px" width="11" height="11" viewBox="0 0 11 11">
<defs><radialGradient id="rg400" cx="0.4" cy="0.35" r="0.7"><stop offset="0" stop-color="#f98a7e"/><stop offset="1" stop-color="#df3a2e"/></radialGradient></defs>
<circle cx="5.5" cy="5.5" r="4.6" fill="url(#rg400)" stroke="#d4473c" stroke-width="0.7"/></svg>
<span class="t" style="left:280px;top:394px;transform:scaleX(0.905);">Short</span>
<span class="t" style="left:325.4px;top:394px;transform:scaleX(0.856);">1.0</span>
<span class="t" style="left:360.4px;top:394px;transform:scaleX(0.853);">0.004</span>
<span class="t" style="left:394.8px;top:394px;transform:scaleX(0.854);">50.0</span>
<span class="t" style="left:430.0px;top:394px;transform:scaleX(0.852);">0.002431</span>
<svg style="left:486px;top:395px" width="12" height="12" viewBox="0 0 12 12"><rect x="0.5" y="0.5" width="11" height="11" fill="#fff" stroke="#a2a38c"/><path d="M11.5 0.5v11h-11" fill="none" stroke="#7a7b62"/><rect x="1.5" y="1.5" width="9" height="9" fill="none" stroke="#ecece4"/><path d="M2.6 5.8L4.8 8.2L9.2 3.2" fill="none" stroke="#000" stroke-width="1.9"/></svg>
<svg style="left:513px;top:394px" width="13" height="13" viewBox="0 0 13 13">
<path d="M1.3 2.5Q3.9 3.1 6.5 1.5Q9.1 3.1 11.7 2.5L11.5 7Q10.8 10.3 6.5 12.5Q2.2 10.3 1.5 7z" fill="url(#shg)" stroke="#e9b54e" stroke-width="1.1" stroke-linejoin="round"/>
<path d="M6.5 2.6V11.4" stroke="#fff7cf" stroke-width="1"/>
<circle cx="1.3" cy="1.9" r="0.8" fill="#efbd55"/><circle cx="6.5" cy="0.8" r="0.8" fill="#efbd55"/><circle cx="11.7" cy="1.9" r="0.8" fill="#efbd55"/>
</svg>
<span class="t" style="left:529.4px;top:381px;transform:scaleX(0.929);">Failure detection</span>
<span class="t" style="left:529.4px;top:394px;transform:scaleX(0.934);">by on-line</span>
<span class="t" style="left:529.4px;top:407px;transform:scaleX(0.945);">monitoring</span>
<span class="t" style="left:613.0px;top:394px;transform:scaleX(0.854);">99.0</span>
<span class="t" style="left:647.7px;top:394px;transform:scaleX(0.852);">0.000024</span>
<svg style="left:795px;top:395px" width="12" height="12" viewBox="0 0 12 12"><rect x="0.5" y="0.5" width="11" height="11" fill="#fff" stroke="#a2a38c"/><path d="M11.5 0.5v11h-11" fill="none" stroke="#7a7b62"/><rect x="1.5" y="1.5" width="9" height="9" fill="none" stroke="#ecece4"/><path d="M2.6 5.8L4.8 8.2L9.2 3.2" fill="none" stroke="#000" stroke-width="1.9"/></svg>
<div class="clip" style="left:819px;top:363px;width:99px;height:75px;">
<svg style="left:3px;top:8px" width="13" height="13" viewBox="0 0 13 13">
<path d="M1.3 2.5Q3.9 3.1 6.5 1.5Q9.1 3.1 11.7 2.5L11.5 7Q10.8 10.3 6.5 12.5Q2.2 10.3 1.5 7z" fill="url(#shg)" stroke="#e9b54e" stroke-width="1.1" stroke-linejoin="round"/>
<path d="M6.5 2.6V11.4" stroke="#fff7cf" stroke-width="1"/>
<circle cx="1.3" cy="1.9" r="0.8" fill="#efbd55"/><circle cx="6.5" cy="0.8" r="0.8" fill="#efbd55"/><circle cx="11.7" cy="1.9" r="0.8" fill="#efbd55"/>
</svg>
<svg style="left:3px;top:37px" width="13" height="13" viewBox="0 0 13 13">
<path d="M1.3 2.5Q3.9 3.1 6.5 1.5Q9.1 3.1 11.7 2.5L11.5 7Q10.8 10.3 6.5 12.5Q2.2 10.3 1.5 7z" fill="url(#shg)" stroke="#e9b54e" stroke-width="1.1" stroke-linejoin="round"/>
<path d="M6.5 2.6V11.4" stroke="#fff7cf" stroke-width="1"/>
<circle cx="1.3" cy="1.9" r="0.8" fill="#efbd55"/><circle cx="6.5" cy="0.8" r="0.8" fill="#efbd55"/><circle cx="11.7" cy="1.9" r="0.8" fill="#efbd55"/>
</svg>
<svg style="left:3px;top:60px" width="13" height="13" viewBox="0 0 13 13">
<path d="M1.3 2.5Q3.9 3.1 6.5 1.5Q9.1 3.1 11.7 2.5L11.5 7Q10.8 10.3 6.5 12.5Q2.2 10.3 1.5 7z" fill="url(#shg)" stroke="#e9b54e" stroke-width="1.1" stroke-linejoin="round"/>
<path d="M6.5 2.6V11.4" stroke="#fff7cf" stroke-width="1"/>
<circle cx="1.3" cy="1.9" r="0.8" fill="#efbd55"/><circle cx="6.5" cy="0.8" r="0.8" fill="#efbd55"/><circle cx="11.7" cy="1.9" r="0.8" fill="#efbd55"/>
</svg>
<span class="t" style="left:19.2px;top:2px;transform:scaleX(0.921);">Multi-channel</span>
<span class="t" style="left:19.2px;top:15px;transform:scaleX(0.941);">parallel output</span>
<span class="t" style="left:19.2px;top:31px;transform:scaleX(0.937);">Information</span>
<span class="t" style="left:19.2px;top:44px;transform:scaleX(0.945);">redundancy</span>
<span class="t" style="left:19.2px;top:59px;transform:scaleX(0.927);">Frame counter</span>
<div style="left:3px;top:29px;width:92px;height:1px;background:#d2d2d2;"></div>
<div style="left:3px;top:58px;width:92px;height:1px;background:#d2d2d2;"></div>
</div>
<span class="t" style="left:920.8px;top:394px;transform:scaleX(0.854);">90.0</span>
<span class="t" style="left:955.7px;top:394px;transform:scaleX(0.852);">0.00024</span>
<div style="left:261px;top:439px;width:61px;height:53px;background:#f0f0f0;"></div>
<div style="left:323px;top:439px;width:34px;height:53px;background:#f0f0f0;"></div>
<div style="left:358px;top:439px;width:33px;height:53px;background:#f0f0f0;"></div>
<div style="left:427px;top:439px;width:47px;height:53px;background:#f0f0f0;"></div>
<div style="left:645px;top:439px;width:46px;height:53px;background:#f0f0f0;"></div>
<div style="left:954px;top:439px;width:42px;height:53px;background:#f0f0f0;"></div>
<div style="left:510px;top:439px;width:99px;height:53px;background:#f0f0f0;"></div>
<div style="left:610px;top:439px;width:34px;height:53px;background:#f0f0f0;"></div>
<svg style="left:264.2px;top:459.2px" width="11" height="11" viewBox="0 0 11 11">
<defs><radialGradient id="rg465" cx="0.4" cy="0.35" r="0.7"><stop offset="0" stop-color="#f98a7e"/><stop offset="1" stop-color="#df3a2e"/></radialGradient></defs>
<circle cx="5.5" cy="5.5" r="4.6" fill="url(#rg465)" stroke="#d4473c" stroke-width="0.7"/></svg>
<span class="t" style="left:280px;top:459px;transform:scaleX(0.899);">Open</span>
<span class="t" style="left:325.4px;top:459px;transform:scaleX(0.854);">99.0</span>
<span class="t" style="left:360.4px;top:459px;transform:scaleX(0.853);">0.481</span>
<span class="t" style="left:394.8px;top:459px;transform:scaleX(0.854);">50.0</span>
<span class="t" style="left:430.0px;top:459px;transform:scaleX(0.852);">0.240717</span>
<svg style="left:486px;top:460px" width="12" height="12" viewBox="0 0 12 12"><rect x="0.5" y="0.5" width="11" height="11" fill="#fff" stroke="#a2a38c"/><path d="M11.5 0.5v11h-11" fill="none" stroke="#7a7b62"/><rect x="1.5" y="1.5" width="9" height="9" fill="none" stroke="#ecece4"/></svg>
<span class="t" style="left:613.0px;top:459px;transform:scaleX(0.856);">0.0</span>
<span class="t" style="left:647.7px;top:459px;transform:scaleX(0.880);">–</span>
<svg style="left:795px;top:460px" width="12" height="12" viewBox="0 0 12 12"><rect x="0.5" y="0.5" width="11" height="11" fill="#fff" stroke="#a2a38c"/><path d="M11.5 0.5v11h-11" fill="none" stroke="#7a7b62"/><rect x="1.5" y="1.5" width="9" height="9" fill="none" stroke="#ecece4"/><path d="M2.6 5.8L4.8 8.2L9.2 3.2" fill="none" stroke="#000" stroke-width="1.9"/></svg>
<div class="clip" style="left:819px;top:439px;width:99px;height:53px;">
<svg style="left:3px;top:-2px" width="13" height="13" viewBox="0 0 13 13">
<path d="M1.3 2.5Q3.9 3.1 6.5 1.5Q9.1 3.1 11.7 2.5L11.5 7Q10.8 10.3 6.5 12.5Q2.2 10.3 1.5 7z" fill="url(#shg)" stroke="#e9b54e" stroke-width="1.1" stroke-linejoin="round"/>
<path d="M6.5 2.6V11.4" stroke="#fff7cf" stroke-width="1"/>
<circle cx="1.3" cy="1.9" r="0.8" fill="#efbd55"/><circle cx="6.5" cy="0.8" r="0.8" fill="#efbd55"/><circle cx="11.7" cy="1.9" r="0.8" fill="#efbd55"/>
</svg>
<svg style="left:3px;top:27px" width="13" height="13" viewBox="0 0 13 13">
<path d="M1.3 2.5Q3.9 3.1 6.5 1.5Q9.1 3.1 11.7 2.5L11.5 7Q10.8 10.3 6.5 12.5Q2.2 10.3 1.5 7z" fill="url(#shg)" stroke="#e9b54e" stroke-width="1.1" stroke-linejoin="round"/>
<path d="M6.5 2.6V11.4" stroke="#fff7cf" stroke-width="1"/>
<circle cx="1.3" cy="1.9" r="0.8" fill="#efbd55"/><circle cx="6.5" cy="0.8" r="0.8" fill="#efbd55"/><circle cx="11.7" cy="1.9" r="0.8" fill="#efbd55"/>
</svg>
<svg style="left:3px;top:50px" width="13" height="13" viewBox="0 0 13 13">
<path d="M1.3 2.5Q3.9 3.1 6.5 1.5Q9.1 3.1 11.7 2.5L11.5 7Q10.8 10.3 6.5 12.5Q2.2 10.3 1.5 7z" fill="url(#shg)" stroke="#e9b54e" stroke-width="1.1" stroke-linejoin="round"/>
<path d="M6.5 2.6V11.4" stroke="#fff7cf" stroke-width="1"/>
<circle cx="1.3" cy="1.9" r="0.8" fill="#efbd55"/><circle cx="6.5" cy="0.8" r="0.8" fill="#efbd55"/><circle cx="11.7" cy="1.9" r="0.8" fill="#efbd55"/>
</svg>
<span class="t" style="left:19.2px;top:-14px;transform:scaleX(0.921);">Multi-channel</span>
<span class="t" style="left:19.2px;top:5px;transform:scaleX(0.941);">parallel output</span>
<span class="t" style="left:19.2px;top:21px;transform:scaleX(0.937);">Information</span>
<span class="t" style="left:19.2px;top:34px;transform:scaleX(0.945);">redundancy</span>
<span class="t" style="left:19.2px;top:52px;transform:scaleX(0.927);">Frame counter</span>
<div style="left:3px;top:19px;width:92px;height:1px;background:#d2d2d2;"></div>
<div style="left:3px;top:48px;width:92px;height:1px;background:#d2d2d2;"></div>
</div>
<span class="t" style="left:920.8px;top:459px;transform:scaleX(0.854);">90.0</span>
<span class="t" style="left:955.7px;top:459px;transform:scaleX(0.852);">0.02407</span>
<div style="left:1064px;top:88px;width:15px;height:419px;background:#f0f0f0;"></div>
<div style="left:1065px;top:103px;width:12px;height:15px;background:#cdcdcd;"></div>
<svg style="left:1067px;top:93px" width="8" height="6" viewBox="0 0 8 6"><path d="M0.8 4.6L4 1.4L7.2 4.6" fill="none" stroke="#333" stroke-width="1.4"/></svg>
<svg style="left:1067px;top:482px" width="8" height="6" viewBox="0 0 8 6"><path d="M0.8 1.2L4 4.4L7.2 1.2" fill="none" stroke="#505050" stroke-width="1.3"/></svg>
<div style="left:14px;top:493px;width:1065px;height:14px;background:#f0f0f0;"></div>
<div style="left:29px;top:493px;width:865px;height:13px;background:#cdcdcd;"></div>
<svg style="left:18px;top:496px" width="6" height="8" viewBox="0 0 6 8"><path d="M4.6 0.8L1.4 4L4.6 7.2" fill="none" stroke="#505050" stroke-width="1.4"/></svg>
<svg style="left:1054px;top:496px" width="6" height="8" viewBox="0 0 6 8"><path d="M1.4 0.8L4.6 4L1.4 7.2" fill="none" stroke="#505050" stroke-width="1.4"/></svg>
<div style="left:1085px;top:87px;width:23px;height:21px;background:#cccccc;border:1px solid #c4c4c4;"></div>
<svg style="left:1090px;top:90px" width="14" height="14" viewBox="0 0 14 14"><circle cx="6" cy="6" r="4.6" fill="#bcbcbc" stroke="#b6b6b6"/><path d="M9.6 7v5M7.1 9.5h5" stroke="#b0b0b0" stroke-width="1.8"/></svg>
<div style="left:1085px;top:112px;width:23px;height:21px;background:#cccccc;border:1px solid #c4c4c4;"></div>
<svg style="left:1090px;top:115px" width="14" height="14" viewBox="0 0 14 14"><circle cx="6" cy="6" r="4.6" fill="#d0d0d0" stroke="#b6b6b6"/><path d="M9.6 7v5M7.1 9.5h5" stroke="#b0b0b0" stroke-width="1.8"/></svg>
<div style="left:1085px;top:141px;width:23px;height:21px;background:#cccccc;border:1px solid #c4c4c4;"></div>
<svg style="left:1090px;top:145px" width="13" height="13" viewBox="0 0 13 13"><path d="M3 3L10 10M10 3L3 10" stroke="#b2b2b2" stroke-width="3" stroke-linecap="round"/></svg>
<div style="left:9px;top:517px;width:1104px;height:19px;background:linear-gradient(180deg,#dde6f4 0%,#eef2f9 45%,#ffffff 100%);border-radius:4px 4px 0 0;border-top:1px solid #d3ddee;"></div>
<svg style="left:14px;top:524px" width="8" height="6" viewBox="0 0 8 6"><path d="M0.4 0.8h7.2L4 5.2z" fill="#1d6fc4"/></svg>
<span class="t" style="left:26.6px;top:521px;transform:scaleX(0.948);color:#166dcc;font-weight:bold;">Metrics</span>
<span class="t" style="left:835.3px;top:521px;transform:scaleX(0.926);color:#1f7fd6;">Metric: Hardware architectural metrics, ISO 26262-5</span>
<svg style="left:1077px;top:522px" width="12" height="12" viewBox="0 0 12 12"><path d="M0.6 10.4h10.4" stroke="#8a8a8a" stroke-width="1.4"/><path d="M1 9.6V7h2.4v2.6M7.6 9.6V6h2.6v3.6" fill="none" stroke="#9a9a9a" stroke-width="0.9"/><path d="M8.9 5V2.4M7.8 3.4L8.9 2.2L10 3.4" fill="none" stroke="#a0a0a0" stroke-width="0.9"/></svg>
<svg style="left:1094.5px;top:523px" width="10" height="10" viewBox="0 0 10 10"><path d="M5 1H1v8h8V5.4" fill="none" stroke="#707070" stroke-width="1"/><path d="M4.6 5.4L8.6 1.4M5.8 1h3.2v3.2" fill="none" stroke="#606060" stroke-width="1"/></svg>
<div style="left:13px;top:545px;width:359px;height:56px;background:#ffffff;border:1px solid #dcdcdc;"></div>
<div style="left:19px;top:545px;width:32.5px;height:1px;background:#ffffff;"></div>
<span class="t" style="left:21px;top:539px;transform:scaleX(0.912);">Totals</span>
<span class="t" style="left:20px;top:555px;transform:scaleX(0.902);">Total Failure Rate:</span>
<span class="t" style="left:294px;top:555px;transform:scaleX(0.841);">3635.928995 FIT</span>
<span class="t" style="left:20px;top:570px;transform:scaleX(0.906);">Total Safety Related:</span>
<span class="t" style="left:294px;top:570px;transform:scaleX(0.841);">3422.526957 FIT</span>
<span class="t" style="left:20px;top:584px;transform:scaleX(0.901);">Total Safe Faults:</span>
<span class="t" style="left:294px;top:584px;transform:scaleX(0.841);">213.402038 FIT</span>
<div style="left:381px;top:545px;width:359px;height:56px;background:#ffffff;border:1px solid #dcdcdc;"></div>
<div style="left:387px;top:545px;width:91px;height:1px;background:#ffffff;"></div>
<span class="t" style="left:389px;top:539px;transform:scaleX(0.905);">Single Point Faults</span>
<span class="t" style="left:388px;top:555px;transform:scaleX(0.902);">Total Failure Rate:</span>
<span class="t" style="left:593px;top:555px;transform:scaleX(0.841);">269.028646 FIT</span>
<span class="t" style="left:388px;top:570px;transform:scaleX(0.899);">Fault Metric:</span>
<span class="t" style="left:593px;top:570px;transform:scaleX(0.884);">92.139473% (expected ≥99.0%)</span>
<div style="left:749px;top:545px;width:359px;height:56px;background:#ffffff;border:1px solid #dcdcdc;"></div>
<div style="left:755px;top:545px;width:63px;height:1px;background:#ffffff;"></div>
<span class="t" style="left:757px;top:539px;transform:scaleX(0.911);">Latent Faults</span>
<span class="t" style="left:756px;top:555px;transform:scaleX(0.902);">Total Failure Rate:</span>
<span class="t" style="left:960.6px;top:555px;transform:scaleX(0.840);">19.432342 FIT</span>
<span class="t" style="left:756px;top:570px;transform:scaleX(0.899);">Fault Metric:</span>
<span class="t" style="left:960.6px;top:570px;transform:scaleX(0.884);">99.383784% (expected ≥90.0%)</span>
<div style="left:9px;top:606px;width:1104px;height:19px;background:linear-gradient(180deg,#dde6f4 0%,#eef2f9 45%,#ffffff 100%);border-radius:4px 4px 0 0;border-top:1px solid #d3ddee;"></div>
<svg style="left:15px;top:612px" width="6" height="9" viewBox="0 0 6 9"><path d="M0.8 0.6v7.8L5.2 4.5z" fill="#1d6fc4"/></svg>
<span class="t" style="left:26.6px;top:610px;transform:scaleX(0.929);color:#166dcc;font-weight:bold;">Extended</span>
<span class="t" style="left:1039.6px;top:610px;transform:scaleX(0.933);color:#1d6fc4;text-decoration:underline;">Customize</span>
<svg style="left:1094px;top:611px" width="12" height="12" viewBox="0 0 12 12"><circle cx="6" cy="6" r="4.6" fill="#fff" stroke="#2d4f8a" stroke-width="1"/><text x="6" y="9.2" font-family="Liberation Sans, sans-serif" font-size="9" font-weight="bold" fill="#2d4f8a" text-anchor="middle">?</text></svg>
<div style="left:4px;top:632px;width:1113px;height:20px;background:#f0f0f0;border-top:1px solid #a8a8a8;"></div>
<div style="left:51px;top:632px;width:70px;height:21px;background:#ffffff;border:1px solid #a8a8a8;border-top:none;border-radius:0 0 4px 4px;"></div>
<svg style="left:8px;top:636px" width="9" height="11" viewBox="0 0 9 11"><rect x="0.6" y="1.8" width="7.8" height="8.6" rx="1" fill="#6f8fd0" stroke="#4a6ab0" stroke-width="0.8"/><rect x="1.8" y="4" width="5.4" height="3.4" fill="#eef2fb"/><path d="M2 0.6v2M4.5 0.6v2M7 0.6v2" stroke="#3d4f78" stroke-width="0.9"/></svg>
<span class="t" style="left:21.3px;top:636px;transform:scaleX(0.920);">Cover</span>
<svg style="left:56.5px;top:637.5px" width="9" height="9" viewBox="0 0 9 9"><circle cx="4.5" cy="4.5" r="3.2" fill="#f6d98e" stroke="#a8701c" stroke-width="1.5"/><circle cx="4.5" cy="4.5" r="1.1" fill="#a8701c"/></svg>
<span class="t" style="left:69px;top:636px;transform:scaleX(0.926);">Worksheet</span>
</body></html>
